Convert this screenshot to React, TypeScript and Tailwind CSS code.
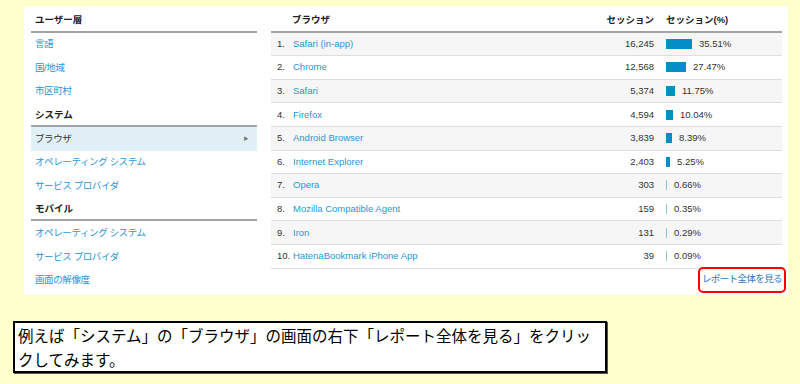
import React from "react";

type Row = { name: string; sessions: string; pct: number };

const rows: Row[] = [
  { name: "Safari (in-app)", sessions: "16,245", pct: 35.51 },
  { name: "Chrome", sessions: "12,568", pct: 27.47 },
  { name: "Safari", sessions: "5,374", pct: 11.75 },
  { name: "Firefox", sessions: "4,594", pct: 10.04 },
  { name: "Android Browser", sessions: "3,839", pct: 8.39 },
  { name: "Internet Explorer", sessions: "2,403", pct: 5.25 },
  { name: "Opera", sessions: "303", pct: 0.66 },
  { name: "Mozilla Compatible Agent", sessions: "159", pct: 0.35 },
  { name: "Iron", sessions: "131", pct: 0.29 },
  { name: "HatenaBookmark iPhone App", sessions: "39", pct: 0.09 },
];

const sections = [
  { title: "ユーザー層", items: ["言語", "国/地域", "市区町村"] },
  { title: "システム", items: ["ブラウザ", "オペレーティング システム", "サービス プロバイダ"] },
  { title: "モバイル", items: ["オペレーティング システム", "サービス プロバイダ", "画面の解像度"] },
];

const SideHeader = ({ title }: { title: string }) => (
  <div className="h-[23.6px] flex items-end pb-[3px] pl-[4px] border-b-2 border-[#a3a3a3] font-bold text-[#222] text-[9.5px]">
    {title}
  </div>
);

export default function App() {
  return (
    <div className="w-[800px] h-[384px] bg-[#ffffcc] pt-[6px] font-['Liberation_Sans','Noto_Sans_CJK_JP',sans-serif]">
      {/* Report panel */}
      <div className="ml-[24px] w-[764px] h-[289px] bg-white flex pl-[7px] pt-[3px]">
        {/* Left menu */}
        <div className="w-[226px] flex flex-col">
          {sections.map((s) => (
            <div key={s.title}>
              <SideHeader title={s.title} />
              {s.items.map((item) => {
                const active = s.title === "システム" && item === "ブラウザ";
                return (
                  <div
                    key={item}
                    className={`h-[23.6px] flex items-center justify-between pl-[4px] pr-[9px] text-[9.5px] tracking-[-0.4px] ${
                      active ? "bg-[#e1eff7] text-[#333]" : "text-[#2a95d5]"
                    }`}
                  >
                    <span>{item}</span>
                    {active && <span className="text-[#777] text-[5px]">▶</span>}
                  </div>
                );
              })}
            </div>
          ))}
        </div>

        {/* Table */}
        <div className="ml-[14px] w-[511px] flex flex-col">
          <div className="h-[23.6px] flex items-end pb-[3px] border-b-2 border-[#a3a3a3] font-bold text-[#222] text-[9.5px]">
            <span className="pl-[21px] flex-1">ブラウザ</span>
            <span className="w-[82px] pr-[12px] text-right">セッション</span>
            <span className="w-[116px]">セッション(%)</span>
          </div>
          {rows.map((r, i) => (
            <div
              key={r.name}
              className={`h-[23.6px] flex items-center border-b border-[#dedede] text-[9.5px] ${
                i % 2 === 0 ? "bg-[#f6f6f6]" : "bg-white"
              }`}
            >
              <span className="w-[22px] pl-[6px] text-[#333] whitespace-nowrap">{i + 1}.</span>
              <span className="flex-1 text-[#2a95d5]">{r.name}</span>
              <span className="w-[82px] pr-[12px] text-right text-[#333]">{r.sessions}</span>
              <span className="w-[116px] flex items-center text-[#333]">
                <span
                  className={`h-[10px] mr-[7px] ${r.pct < 1 ? "bg-[#86c6e8]" : "bg-[#058dc7]"}`}
                  style={{ width: Math.max(1, Math.round(r.pct * 0.732)) }}
                />
                {r.pct.toFixed(2)}%
              </span>
            </div>
          ))}
          <div className="flex justify-end mt-[-2px] mr-[-4px]">
            <span className="h-[26px] px-[2px] flex items-center border-2 border-[#ff0000] rounded-[5px] text-[9.5px] tracking-[-0.6px] text-[#2a78c0]">
              レポート全体を見る
            </span>
          </div>
        </div>
      </div>

      {/* Note */}
      <div className="ml-[13px] mt-[26px] w-[594px] border-2 border-black shadow-[1px_1px_0_#555] bg-white pl-[3px] text-[15.5px] leading-[24px] text-black font-['Noto_Sans_CJK_JP',sans-serif] whitespace-nowrap">
        例えば「システム」の「ブラウザ」の画面の右下「レポート全体を見る」をクリッ
        <br />
        クしてみます。
      </div>
    </div>
  );
}
